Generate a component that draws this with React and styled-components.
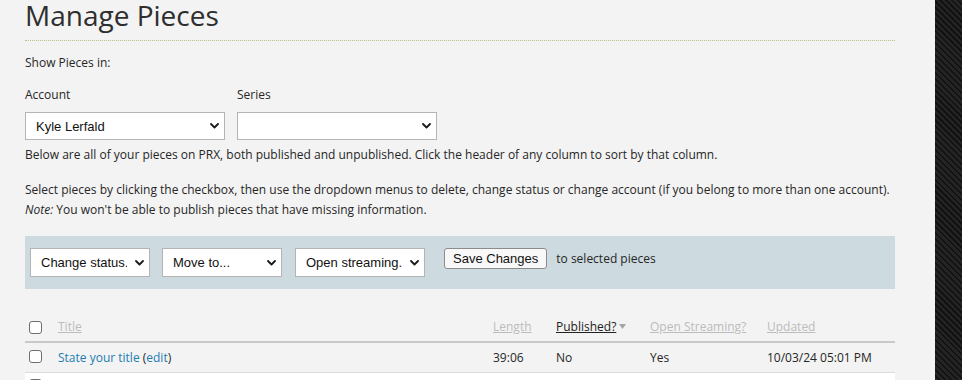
import React from "react";
import styled, { createGlobalStyle } from "styled-components";

const GlobalStyle = createGlobalStyle`
  html, body {
    margin: 0;
    padding: 0;
    background: #f3f3f3;
  }
  body {
    font-family: "Open Sans", "DejaVu Sans", sans-serif;
    font-size: 12px;
    line-height: 20px;
    color: #262626;
  }
`;

const Page = styled.div`
  display: flex;
  min-height: 380px;
  height: 100vh;
  overflow: hidden;
`;

const Main = styled.main`
  width: 870px;
  margin-left: 25px;
`;

const Stripe = styled.div`
  margin-left: auto;
  width: 27px;
  flex-shrink: 0;
  background: repeating-linear-gradient(
    45deg,
    #242424 0px,
    #242424 2.5px,
    #121212 2.5px,
    #121212 4.2px
  );
`;

const Heading = styled.h1`
  margin: 0;
  font-size: 28px;
  font-weight: 400;
  line-height: 30px;
  color: #2e2e2e;
  padding-bottom: 10px;
  border-bottom: 1px dotted #b7c38a;
`;

const Text = styled.p`
  margin: ${(p) => p.$top || 0}px 0 0;
`;

const FilterGrid = styled.div`
  display: grid;
  grid-template-columns: 200px 200px;
  column-gap: 12px;
  margin-top: 12px;
`;

const Label = styled.label`
  display: block;
  height: 20px;
  margin-bottom: 7px;
`;

const SelectWrap = styled.div`
  position: relative;
  width: ${(p) => p.$width}px;
  height: ${(p) => p.$height || 28}px;
`;

const NativeSelect = styled.select`
  appearance: none;
  -webkit-appearance: none;
  box-sizing: border-box;
  width: 100%;
  height: 100%;
  margin: 0;
  padding: 0 22px 0 10px;
  background: #fff;
  border: 1px solid #b4b4b4;
  border-radius: 0;
  font-family: "Liberation Sans", Arial, sans-serif;
  font-size: 13px;
  color: #111;
  outline: none;
`;

const Chevron = styled.svg`
  position: absolute;
  right: ${(p) => p.$right || 6}px;
  top: 50%;
  margin-top: -3px;
  pointer-events: none;
`;

function Select({ width, height, right, children }) {
  return (
    <SelectWrap $width={width} $height={height}>
      <NativeSelect>{children}</NativeSelect>
      <Chevron $right={right} width="9" height="6" viewBox="0 0 9 6">
        <path d="M1 1 L4.5 4.5 L8 1" fill="none" stroke="#1a1a1a" strokeWidth="1.8" strokeLinecap="round" strokeLinejoin="round" />
      </Chevron>
    </SelectWrap>
  );
}

const ActionBar = styled.div`
  display: flex;
  align-items: flex-start;
  margin-top: 16px;
  padding: 12px 5px;
  background: #cddadf;
`;

const BarItem = styled.div`
  margin-left: ${(p) => p.$gap || 0}px;
  display: flex;
  align-items: center;
  height: ${(p) => p.$h || 29}px;
`;

const SaveButton = styled.button`
  box-sizing: border-box;
  height: 21px;
  padding: 0 8px;
  margin: 0;
  background: #f8f8f8;
  border: 1px solid #8c8c8c;
  border-radius: 3px;
  font-family: "Liberation Sans", Arial, sans-serif;
  font-size: 13px;
  color: #111;
`;

const BarNote = styled.span`
  margin-left: 9px;
  line-height: 21px;
`;

const Table = styled.div`
  margin-top: 24px;
`;

const Row = styled.div`
  display: grid;
  grid-template-columns: 33px 435px 63px 94px 117px 1fr;
  align-items: start;
  height: ${(p) => (p.$head ? 28 : 29)}px;
  box-sizing: content-box;
  background: ${(p) => (p.$odd ? "#fff" : "transparent")};
  border-bottom: ${(p) => (p.$head ? "2px solid #c9c9c9" : "1px solid #dcdcdc")};
`;

const Cell = styled.div`
  padding-top: ${(p) => (p.$head ? 4 : 5)}px;
  white-space: nowrap;
`;

const CheckCell = styled.div`
  padding-top: ${(p) => p.$top}px;
  padding-left: 4px;
  height: 13px;
`;

const Check = styled.input.attrs({ type: "checkbox" })`
  appearance: none;
  -webkit-appearance: none;
  display: block;
  box-sizing: border-box;
  width: 13px;
  height: 13px;
  margin: 0;
  background: #fff;
  border: 1px solid #6e6e6e;
  border-radius: 3px;
`;

const SortLink = styled.a`
  color: ${(p) => (p.$active ? "#222" : "#bcbcbc")};
  text-decoration: underline;
  cursor: pointer;
`;

const SortArrow = styled.svg`
  margin-left: 3px;
  vertical-align: 2px;
`;

const TitleLink = styled.a`
  color: #1c7db2;
  text-decoration: none;
`;

const columns = [
  { key: "length", label: "Length" },
  { key: "published", label: "Published?", active: true },
  { key: "streaming", label: "Open Streaming?" },
  { key: "updated", label: "Updated" },
];

const pieces = [
  { title: "State your title", length: "39:06", published: "No", streaming: "Yes", updated: "10/03/24 05:01 PM" },
  { title: "", length: "", published: "", streaming: "", updated: "" },
];

export default function App() {
  return (
    <>
      <GlobalStyle />
      <Page>
        <Main>
          <Heading>Manage Pieces</Heading>
          <Text $top={12}>Show Pieces in:</Text>
          <FilterGrid>
            <div>
              <Label>Account</Label>
              <Select width={200}>
                <option>Kyle Lerfald</option>
              </Select>
            </div>
            <div>
              <Label>Series</Label>
              <Select width={200}>
                <option></option>
              </Select>
            </div>
          </FilterGrid>
          <Text $top={5}>
            Below are all of your pieces on PRX, both published and unpublished. Click the header of any column to sort by that column.
          </Text>
          <Text $top={15}>
            Select pieces by clicking the checkbox, then use the dropdown menus to delete, change status or change account (if you belong to more than one account).
            <br />
            <em>Note:</em> You won't be able to publish pieces that have missing information.
          </Text>
          <ActionBar>
            <BarItem>
              <Select width={120} height={29}>
                <option>Change status...</option>
              </Select>
            </BarItem>
            <BarItem $gap={12}>
              <Select width={120} height={29}>
                <option>Move to...</option>
              </Select>
            </BarItem>
            <BarItem $gap={13}>
              <Select width={130} height={29}>
                <option>Open streaming...</option>
              </Select>
            </BarItem>
            <BarItem $gap={19} $h={21}>
              <SaveButton>Save Changes</SaveButton>
              <BarNote>to selected pieces</BarNote>
            </BarItem>
          </ActionBar>
          <Table>
            <Row $head>
              <CheckCell $top={8}>
                <Check />
              </CheckCell>
              <Cell $head>
                <SortLink>Title</SortLink>
              </Cell>
              {columns.map((c) => (
                <Cell $head key={c.key}>
                  <SortLink $active={c.active}>{c.label}</SortLink>
                  {c.active && (
                    <SortArrow width="7" height="5" viewBox="0 0 7 5">
                      <path d="M0 0 H7 L3.5 5 Z" fill="#a5a5a5" />
                    </SortArrow>
                  )}
                </Cell>
              ))}
            </Row>
            {pieces.map((p, i) => (
              <Row key={i} $odd={i % 2 === 1}>
                <CheckCell $top={i === 0 ? 7 : 6}>
                  <Check />
                </CheckCell>
                <Cell>
                  {p.title && (
                    <>
                      <TitleLink href="#">{p.title}</TitleLink> (<TitleLink href="#">edit</TitleLink>)
                    </>
                  )}
                </Cell>
                <Cell>{p.length}</Cell>
                <Cell>{p.published}</Cell>
                <Cell>{p.streaming}</Cell>
                <Cell>{p.updated}</Cell>
              </Row>
            ))}
          </Table>
        </Main>
        <Stripe />
      </Page>
    </>
  );
}
